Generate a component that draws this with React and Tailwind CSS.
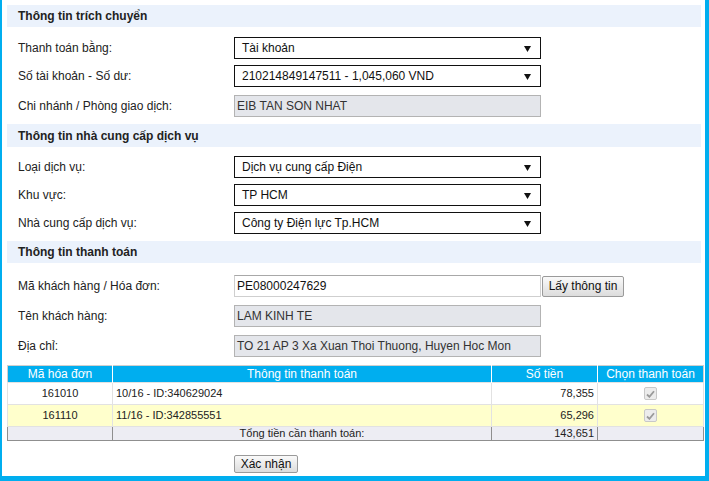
import React from 'react';

const font = { fontFamily: '"Liberation Sans", Arial, sans-serif' };

const SectionHeader = ({ title, className = '' }) => (
  <div className={`mr-[2px] flex h-[22px] items-center bg-[#EBF2FC] pl-[11px] text-[12px] font-bold text-[#222] ${className}`}>
    {title}
  </div>
);

const Row = ({ label, children, className = '' }) => (
  <div className={`flex items-center pl-[11px] text-[12px] text-[#222] ${className}`}>
    <div className="w-[216px] shrink-0">{label}</div>
    {children}
  </div>
);

const FakeSelect = ({ value }) => (
  <div className="relative flex h-[22px] w-[307px] items-center border border-[#111] bg-white pl-[7px] text-[12px] text-[#111]">
    {value}
    <svg className="absolute right-[9px] top-[8px]" width="7" height="6" viewBox="0 0 7 6">
      <path d="M0 0 H7 L3.5 6 Z" fill="#111" />
    </svg>
  </div>
);

const ReadOnly = ({ value }) => (
  <div className="flex h-[22px] w-[307px] items-center border border-[#B3B3B3] bg-[#E4E6EB] pl-[2px] text-[12px] text-[#333]">
    {value}
  </div>
);

const Btn = ({ label, className = '' }) => (
  <button
    type="button"
    className={`rounded-[2px] border border-[#9a9a9a] bg-gradient-to-b from-[#fafafa] to-[#dcdcdc] text-[12px] leading-none text-[#111] ${className}`}
  >
    {label}
  </button>
);

const DisabledCheck = () => (
  <span className="inline-flex h-[13px] w-[13px] items-center justify-center rounded-[2px] border border-[#c8c8c8] bg-[#ececec] align-middle">
    <svg width="9" height="8" viewBox="0 0 9 8">
      <path d="M1 4.5 L3.4 6.8 L8 1.2" stroke="#9a9a9a" strokeWidth="1.8" fill="none" />
    </svg>
  </span>
);

const bills = [
  { code: '161010', info: '10/16 - ID:340629024', amount: '78,355', bg: 'bg-white' },
  { code: '161110', info: '11/16 - ID:342855551', amount: '65,296', bg: 'bg-[#FFFFCC]' },
];

export default function App() {
  return (
    <div
      className="box-border h-[481px] w-[709px] overflow-hidden border-b-[5px] border-l-[2px] border-r-[4px] border-[#00AEEF] bg-white pl-[5px] pr-[2px] pt-[5px]"
      style={font}
    >
      <SectionHeader title="Thông tin trích chuyển" />
      <Row label="Thanh toán bằng:" className="mt-[10px]">
        <FakeSelect value="Tài khoản" />
      </Row>
      <Row label="Số tài khoản - Số dư:" className="mt-[6px]">
        <FakeSelect value="210214849147511 - 1,045,060 VND" />
      </Row>
      <Row label="Chi nhánh / Phòng giao dịch:" className="mt-[8px]">
        <ReadOnly value="EIB TAN SON NHAT" />
      </Row>

      <SectionHeader title="Thông tin nhà cung cấp dịch vụ" className="mt-[7px] h-[23px]" />
      <Row label="Loại dịch vụ:" className="mt-[9px]">
        <FakeSelect value="Dịch vụ cung cấp Điện" />
      </Row>
      <Row label="Khu vực:" className="mt-[6px]">
        <FakeSelect value="TP HCM" />
      </Row>
      <Row label="Nhà cung cấp dịch vụ:" className="mt-[6px]">
        <FakeSelect value="Công ty Điện lực Tp.HCM" />
      </Row>

      <SectionHeader title="Thông tin thanh toán" className="mt-[7px]" />
      <Row label="Mã khách hàng / Hóa đơn:" className="mt-[12px]">
        <div className="flex h-[22px] w-[307px] items-center border border-[#cfcfcf] border-t-[#a8a8a8] bg-white pl-[2px] text-[12px] text-[#111]">
          PE08000247629
        </div>
        <Btn label="Lấy thông tin" className="ml-[1px] h-[21px] w-[82px]" />
      </Row>
      <Row label="Tên khách hàng:" className="mt-[8px]">
        <ReadOnly value="LAM KINH TE" />
      </Row>
      <Row label="Địa chỉ:" className="mt-[8px]">
        <ReadOnly value="TO 21 AP 3 Xa Xuan Thoi Thuong, Huyen Hoc Mon" />
      </Row>

      <table className="mt-[8px] w-[696px] table-fixed border-collapse border border-[#cfcfcf]">
        <colgroup>
          <col className="w-[105px]" />
          <col className="w-[379px]" />
          <col className="w-[106px]" />
          <col className="w-[106px]" />
        </colgroup>
        <thead>
          <tr className="h-[17px] bg-[#00AEEF] text-[12px] leading-[15px] text-white">
            <th className="border-r border-white p-0 font-normal">Mã hóa đơn</th>
            <th className="border-r border-white p-0 font-normal">Thông tin thanh toán</th>
            <th className="border-r border-white p-0 font-normal">Số tiền</th>
            <th className="p-0 font-normal">Chọn thanh toán</th>
          </tr>
        </thead>
        <tbody className="text-[11px] leading-[13px] text-[#222]">
          {bills.map(b => (
            <tr key={b.code} className={`h-[22px] ${b.bg}`}>
              <td className="border border-[#e2e2e2] p-0 text-center">{b.code}</td>
              <td className="border border-[#e2e2e2] p-0 pl-[3px]">{b.info}</td>
              <td className="border border-[#e2e2e2] p-0 pr-[3px] text-right">{b.amount}</td>
              <td className="border border-[#e2e2e2] p-0 text-center">
                <DisabledCheck />
              </td>
            </tr>
          ))}
          <tr className="h-[14px] bg-[#EDEDF3]">
            <td className="border border-[#8f8f8f] p-0"></td>
            <td className="border border-[#8f8f8f] p-0 text-center">Tổng tiền cần thanh toán:</td>
            <td className="border border-[#8f8f8f] p-0 pr-[3px] text-right">143,651</td>
            <td className="border border-[#8f8f8f] p-0"></td>
          </tr>
        </tbody>
      </table>

      <div className="mt-[10px] pl-[227px]">
        <Btn label="Xác nhận" className="h-[18px] w-[64px]" />
      </div>
    </div>
  );
}
